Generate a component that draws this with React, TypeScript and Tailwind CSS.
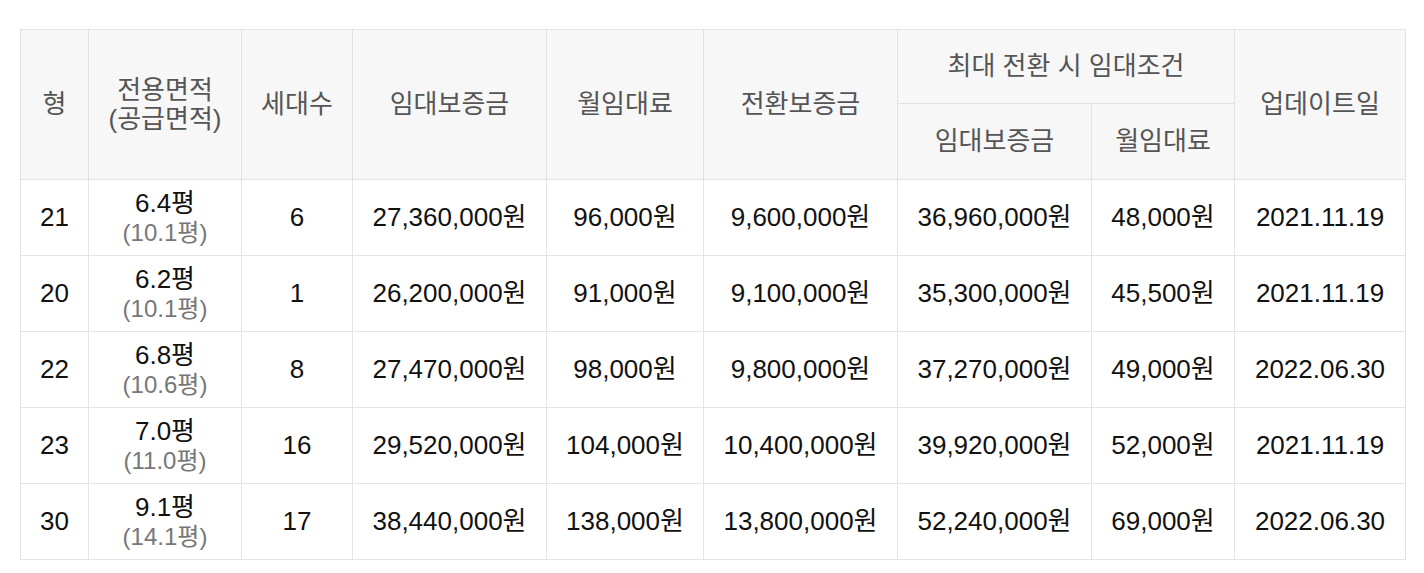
const rows = [
  { type: "21", area: "6.4평", supply: "(10.1평)", units: "6", deposit: "27,360,000원", rent: "96,000원", conv: "9,600,000원", maxDeposit: "36,960,000원", maxRent: "48,000원", updated: "2021.11.19" },
  { type: "20", area: "6.2평", supply: "(10.1평)", units: "1", deposit: "26,200,000원", rent: "91,000원", conv: "9,100,000원", maxDeposit: "35,300,000원", maxRent: "45,500원", updated: "2021.11.19" },
  { type: "22", area: "6.8평", supply: "(10.6평)", units: "8", deposit: "27,470,000원", rent: "98,000원", conv: "9,800,000원", maxDeposit: "37,270,000원", maxRent: "49,000원", updated: "2022.06.30" },
  { type: "23", area: "7.0평", supply: "(11.0평)", units: "16", deposit: "29,520,000원", rent: "104,000원", conv: "10,400,000원", maxDeposit: "39,920,000원", maxRent: "52,000원", updated: "2021.11.19" },
  { type: "30", area: "9.1평", supply: "(14.1평)", units: "17", deposit: "38,440,000원", rent: "138,000원", conv: "13,800,000원", maxDeposit: "52,240,000원", maxRent: "69,000원", updated: "2022.06.30" },
];

const th = "border border-[#e3e3e3] bg-[#f7f7f7] font-normal text-[#555] text-[26px] leading-[29px]";
const td = "border border-[#e3e3e3] text-[26px] leading-[29px] text-[#111] text-center";

export default function App() {
  return (
    <div className="w-full min-h-screen bg-white pt-[29px] px-[20px] font-['Liberation_Sans','Noto_Sans_CJK_KR',sans-serif]">
      <table className="w-[1385px] border-collapse table-fixed">
        <colgroup>
          <col className="w-[68px]" />
          <col className="w-[153px]" />
          <col className="w-[111px]" />
          <col className="w-[194px]" />
          <col className="w-[157px]" />
          <col className="w-[194px]" />
          <col className="w-[194px]" />
          <col className="w-[143px]" />
          <col className="w-[171px]" />
        </colgroup>
        <thead>
          <tr className="h-[74px]">
            <th rowSpan={2} className={th}>형</th>
            <th rowSpan={2} className={th}>전용면적<br />(공급면적)</th>
            <th rowSpan={2} className={th}>세대수</th>
            <th rowSpan={2} className={th}>임대보증금</th>
            <th rowSpan={2} className={th}>월임대료</th>
            <th rowSpan={2} className={th}>전환보증금</th>
            <th colSpan={2} className={th}>최대 전환 시 임대조건</th>
            <th rowSpan={2} className={th}>업데이트일</th>
          </tr>
          <tr className="h-[76px]">
            <th className={th}>임대보증금</th>
            <th className={th}>월임대료</th>
          </tr>
        </thead>
        <tbody>
          {rows.map((r) => (
            <tr key={r.type} className="h-[76px]">
              <td className={td}>{r.type}</td>
              <td className={td}>
                <div>{r.area}</div>
                <div className="text-[24px] text-[#777]">{r.supply}</div>
              </td>
              <td className={td}>{r.units}</td>
              <td className={td}>{r.deposit}</td>
              <td className={td}>{r.rent}</td>
              <td className={td}>{r.conv}</td>
              <td className={td}>{r.maxDeposit}</td>
              <td className={td}>{r.maxRent}</td>
              <td className={td}>{r.updated}</td>
            </tr>
          ))}
        </tbody>
      </table>
    </div>
  );
}
